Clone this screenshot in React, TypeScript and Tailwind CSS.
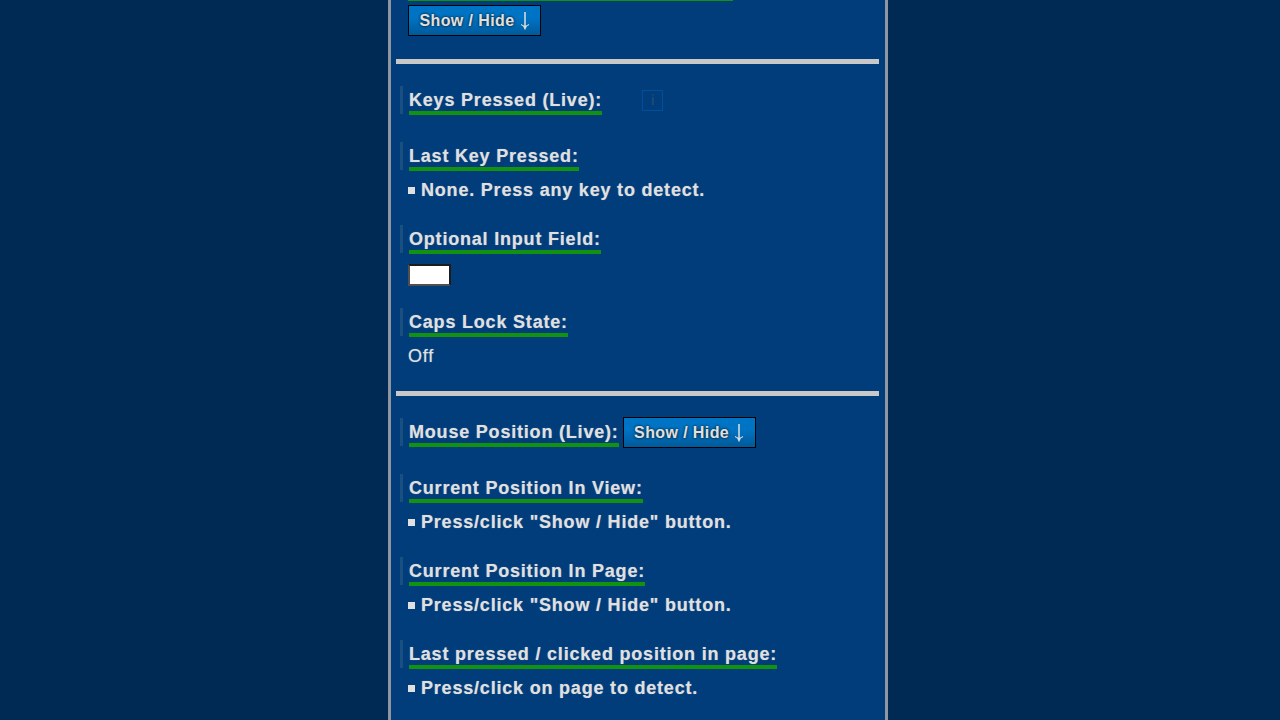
import React from "react";

function Heading({ children, extra }: { children: React.ReactNode; extra?: React.ReactNode }) {
  return (
    <div className="flex h-7 items-start">
      <h2 className="h-7 border-l-3 border-[#1a5080] pl-[6px] text-lg/7 font-bold">
        <span className="border-b-4 border-[#11930f] pb-px">{children}</span>
      </h2>
      {extra}
    </div>
  );
}

function ToggleButton({ label }: { label: string }) {
  return (
    <button
      type="button"
      aria-label={label}
      className="flex h-[31px] w-[133px] items-center justify-center gap-[5px] whitespace-nowrap border border-black bg-linear-to-b from-[#0074c4] from-40% to-[#005a9b] text-base font-bold tracking-wide text-[#e0e0e0] text-shadow-[0_0_3px_#000000]"
    >
      Show / Hide
      <svg viewBox="0 0 10 20" className="h-5 w-[10px]" fill="none" stroke="#e0e0e0" aria-hidden="true">
        <path d="M5 1V17" strokeWidth="1.5" />
        <path d="M1 13.5Q4 14.5 5 18.5Q6 14.5 9 13.5L5 15.5Z" fill="#e0e0e0" strokeWidth=".7" />
      </svg>
    </button>
  );
}

function Result({ children }: { children: React.ReactNode }) {
  return (
    <p className="mt-[6px] flex items-center gap-[6px] pl-2 text-lg/7 font-bold">
      <span className="size-[7px] bg-[#e0e0e0]" />
      {children}
    </p>
  );
}

const divider = "-ml-1 -mr-[3px] h-[5px] border-0 bg-[#c8c8c8]";

export default function App() {
  return (
    <div className="min-h-screen overflow-hidden bg-[#002a54] pr-1 font-['Liberation_Sans',Arial,sans-serif] text-[#e0e0e0]">
      <main className="mx-auto min-h-screen w-full max-w-[500px] border-x-3 border-[#9096a0] bg-[#003d7a] px-[9px] pb-4 tracking-wider text-shadow-[0_0_1px_#e0e0e080]">
        <div className="h-px pl-2">
          <div className="h-px w-[325px] bg-[#11930f]" />
        </div>
        <div className="mt-1 mb-[23px] pl-2">
          <ToggleButton label="Show / Hide key details" />
        </div>
        <hr className={divider} />

        <div className="flex flex-col pt-[22px] pb-[21px]">
          <Heading
            extra={
              <button
                type="button"
                aria-label="Information"
                className="mt-1 ml-10 size-[21px] border border-[#004f9c] text-center text-sm/[19px] font-bold tracking-normal text-[#1a4a78] text-shadow-none"
              >
                i
              </button>
            }
          >
            Keys Pressed (Live):
          </Heading>
          <section className="mt-7">
            <Heading>Last Key Pressed:</Heading>
            <Result>None. Press any key to detect.</Result>
          </section>
          <section className="mt-[21px]">
            <Heading>
              <label htmlFor="key-input">Optional Input Field:</label>
            </Heading>
            <input
              id="key-input"
              type="text"
              className="mt-[11px] ml-2 block h-[22px] w-[43px] border-2 border-t-[#1c1c1c] border-r-[#1c1c1c] border-b-[#505050] border-l-[#505050] bg-white px-1 text-sm text-black"
            />
          </section>
          <section className="mt-[22px]">
            <Heading>Caps Lock State:</Heading>
            <p className="mt-[6px] pl-2 text-lg/7">Off</p>
          </section>
        </div>
        <hr className={divider} />

        <div className="flex flex-col pt-[22px]">
          <Heading
            extra={
              <div className="-mt-px ml-1">
                <ToggleButton label="Show / Hide mouse position" />
              </div>
            }
          >
            Mouse Position (Live):
          </Heading>
          <section className="mt-7">
            <Heading>Current Position In View:</Heading>
            <Result>Press/click "Show / Hide" button.</Result>
          </section>
          <section className="mt-[21px]">
            <Heading>Current Position In Page:</Heading>
            <Result>Press/click "Show / Hide" button.</Result>
          </section>
          <section className="mt-[21px]">
            <Heading>Last pressed / clicked position in page:</Heading>
            <Result>Press/click on page to detect.</Result>
          </section>
        </div>
      </main>
    </div>
  );
}
